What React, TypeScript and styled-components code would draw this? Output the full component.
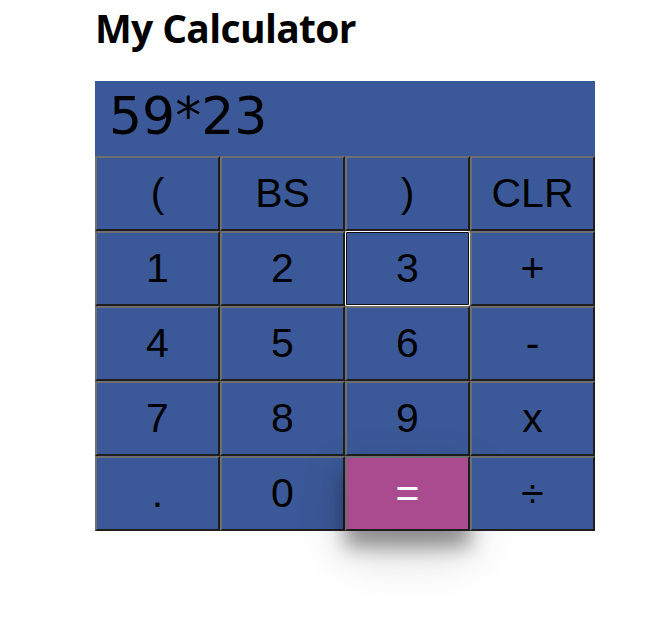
import React from "react";
import styled, { createGlobalStyle, css } from "styled-components";

const Global = createGlobalStyle`
  html, body, #root { margin: 0; padding: 0; background: #fff; min-height: 100%; }
  html, body { height: 100%; }
  body { font-family: "Open Sans", "Noto Sans", sans-serif; }
`;

const Page = styled.div`
  min-height: 623px;
  padding: 0 0 0 95px;
  box-sizing: border-box;
`;

const Title = styled.h1`
  margin: 0;
  padding-top: 3px;
  height: 81px;
  box-sizing: border-box;
  font-family: "Open Sans", "Noto Sans", sans-serif;
  font-size: 39px;
  line-height: 50px;
  font-weight: 700;
  letter-spacing: -0.65px;
  color: #000;
`;

const Calc = styled.div`
  width: 500px;
  display: grid;
  grid-template-columns: repeat(4, 125px);
  grid-auto-rows: 75px;
`;

const Display = styled.div`
  grid-column: 1 / -1;
  background: #3b5998;
  display: flex;
  align-items: center;
  padding: 0 0 6px 14px;
  font-family: "DejaVu Sans", Verdana, sans-serif;
  font-size: 52px;
  color: #000;
  box-sizing: border-box;
`;

const Key = styled.button<{ $accent?: boolean; $focused?: boolean }>`
  position: relative;
  margin: 0;
  padding: 0;
  box-sizing: border-box;
  background: #3b5998;
  border: 2px solid;
  border-color: #6f6f6f #1e1e1e #1e1e1e #6f6f6f;
  font-family: "Liberation Sans", Arial, sans-serif;
  font-size: 41px;
  color: #000;
  cursor: pointer;
  ${(p) =>
    p.$accent &&
    css`
      background: #ab4b8f;
      color: #fff;
      box-shadow: 0 16px 18px 0 rgba(0, 0, 0, 0.35), 0 20px 50px 0 rgba(0, 0, 0, 0.2);
    `}
  ${(p) =>
    p.$focused &&
    css`
      border-color: #101010;
      border-radius: 2px;
      outline: 1px solid #fff;
      outline-offset: -1px;
    `}
`;

const keys = [
  "(", "BS", ")", "CLR",
  "1", "2", "3", "+",
  "4", "5", "6", "-",
  "7", "8", "9", "x",
  ".", "0", "=", "÷",
];

export default function App() {
  return (
    <>
      <Global />
      <Page>
        <Title>My Calculator</Title>
        <Calc>
          <Display>59*23</Display>
          {keys.map((k) => (
            <Key key={k} $accent={k === "="} $focused={k === "3"}>
              {k}
            </Key>
          ))}
        </Calc>
      </Page>
    </>
  );
}
